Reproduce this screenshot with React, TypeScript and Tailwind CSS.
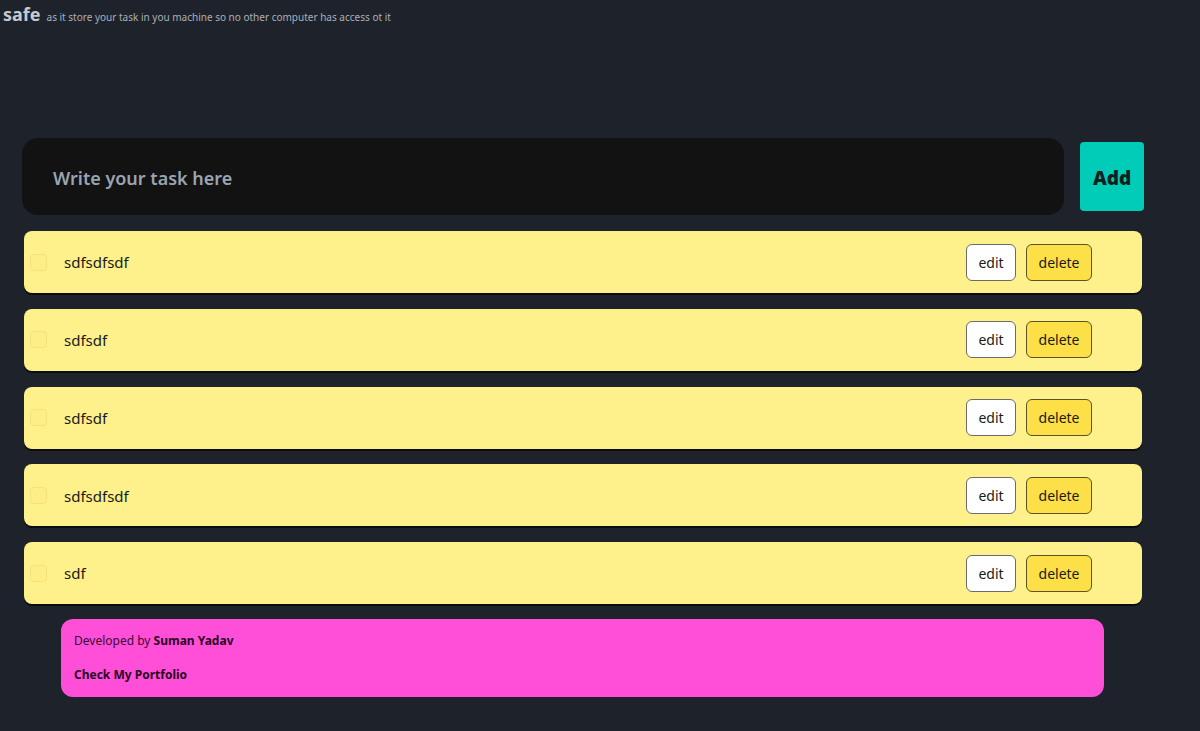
import React from "react";

const tasks = ["sdfsdfsdf", "sdfsdf", "sdfsdf", "sdfsdfsdf", "sdf"];

function TaskRow({ text }: { text: string }) {
  return (
    <div className="flex h-[62px] w-[1118px] items-center rounded-lg bg-[#fef08a] shadow-[0_2px_0_#0b0d10]">
      <span className="ml-[6px] h-[17px] w-[17px] rounded-[4px] border border-[#f6e27a] bg-[#fdee88]" />
      <span className="ml-[17px] flex-1 pt-[1px] text-[15px] text-[#1a1a1a]">{text}</span>
      <button className="h-[37px] w-[50px] rounded-md border border-[#6b6b6b] bg-white text-[14px] text-[#1a1a1a]">
        edit
      </button>
      <button className="ml-[10px] mr-[50px] h-[37px] w-[66px] rounded-md border border-[#5c5320] bg-[#fde047] text-[14px] text-[#1a1a1a]">
        delete
      </button>
    </div>
  );
}

export default function App() {
  return (
    <div
      className="min-h-[731px] bg-[#1e222a]"
      style={{ fontFamily: '"Noto Sans", "Open Sans", sans-serif' }}
    >
      <div className="flex items-baseline gap-[6px] pl-[3px] pt-[1px]">
        <span className="text-[18px] font-bold text-[#c5c9d0]">safe</span>
        <span className="text-[10px] text-[#aab0b9]">
          as it store your task in you machine so no other computer has access ot it
        </span>
      </div>

      <div className="ml-[22px] mt-[110px] flex items-center gap-[16px]">
        <div className="flex h-[77px] w-[1042px] items-center rounded-2xl bg-[#121212] pl-[31px] pt-[3px]">
          <span className="text-[18px] font-semibold text-[#9aa4b1]">Write your task here</span>
        </div>
        <button className="flex h-[69px] w-[64px] items-center justify-center rounded bg-[#00ccb8] pt-[3px] text-[19px] font-black text-[#10201e]">
          Add
        </button>
      </div>

      <div className="ml-[24px] mt-[16px] flex flex-col gap-[15.75px]">
        {tasks.map((t, i) => (
          <TaskRow key={i} text={t} />
        ))}
      </div>

      <div className="ml-[61px] mt-[15px] flex h-[78px] w-[1043px] flex-col justify-center gap-[16px] rounded-xl bg-[#ff4fd8] pl-[13px] text-[12px] text-[#3a0a30]">
        <div>
          Developed by <span className="font-bold text-[#2a0522]">Suman Yadav</span>
        </div>
        <div className="font-bold text-[#2a0522]">Check My Portfolio</div>
      </div>
    </div>
  );
}
